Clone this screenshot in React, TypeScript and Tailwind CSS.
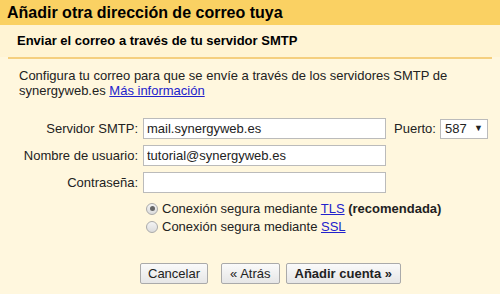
export default function App() {
  const font = { fontFamily: '"Liberation Sans", Arial, sans-serif' };
  return (
    <div className="w-[500px] h-[294px] bg-[#fff7de] text-[#222] overflow-hidden" style={font}>
      <div className="h-[25px] bg-[#fad163] px-[7px] flex items-center">
        <h1 className="text-[16px] font-bold text-black">Añadir otra dirección de correo tuya</h1>
      </div>
      <div className="bg-[#fff4d4] h-[32px] flex items-center px-[17px]">
        <h2 className="text-[13px] font-bold text-black">Enviar el correo a través de tu servidor SMTP</h2>
      </div>
      <div className="mx-[8px] h-[2px] bg-[#f5cf7e]" />

      <p className="px-[19px] pt-[9px] text-[13px] leading-[15px]">
        Configura tu correo para que se envíe a través de los servidores SMTP de
        <br />
        synergyweb.es <a href="#" className="text-[#2222cc] underline">Más información</a>
      </p>

      <div className="mt-[20px] grid grid-cols-[138px_243px_auto] gap-x-[5px] gap-y-[6px] items-center text-[13px]">
        <label className="text-right">Servidor SMTP:</label>
        <input
          className="h-[21px] border border-[#bbb] bg-white px-[3px] text-[13px] outline-none"
          defaultValue="mail.synergyweb.es"
        />
        <div className="flex items-center gap-[4px] pl-[3px]">
          <span>Puerto:</span>
          <div className="h-[20px] w-[48px] border border-[#bbb] bg-white flex items-center justify-between px-[4px]">
            <span>587</span>
            <span className="text-[9px]">▼</span>
          </div>
        </div>

        <label className="text-right">Nombre de usuario:</label>
        <input
          className="h-[21px] border border-[#bbb] bg-white px-[3px] text-[13px] outline-none"
          defaultValue="tutorial@synergyweb.es"
        />
        <div />

        <label className="text-right">Contraseña:</label>
        <input type="password" className="h-[21px] border border-[#bbb] bg-white px-[3px] outline-none" />
        <div />
      </div>

      <div className="ml-[146px] mt-[9px] flex flex-col gap-[5px] text-[13px]">
        <label className="flex items-center gap-[4px] h-[13px]">
          <span className="w-[12px] h-[12px] rounded-full border border-[#aaa] bg-gradient-to-b from-[#f4f4f4] to-[#dcdcdc] flex items-center justify-center">
            <span className="w-[5px] h-[5px] rounded-full bg-[#666]" />
          </span>
          <span>
            Conexión segura mediante <a href="#" className="text-[#2222cc] underline">TLS</a>{' '}
            <b>(recomendada)</b>
          </span>
        </label>
        <label className="flex items-center gap-[4px] h-[13px]">
          <span className="w-[12px] h-[12px] rounded-full border border-[#aaa] bg-gradient-to-b from-[#f4f4f4] to-[#dcdcdc]" />
          <span>
            Conexión segura mediante <a href="#" className="text-[#2222cc] underline">SSL</a>
          </span>
        </label>
      </div>

      <div className="ml-[140px] mt-[30px] flex gap-[6px] text-[13px]">
        <button className="h-[21px] px-[7px] border border-[#aaa] rounded-[2px] bg-gradient-to-b from-[#fafafa] to-[#e6e6e6] mr-[7px]">
          Cancelar
        </button>
        <button className="h-[21px] px-[8px] border border-[#aaa] rounded-[2px] bg-gradient-to-b from-[#fafafa] to-[#e6e6e6]">
          « Atrás
        </button>
        <button className="h-[21px] px-[8px] border border-[#aaa] rounded-[2px] bg-gradient-to-b from-[#fafafa] to-[#e6e6e6] font-bold">
          Añadir cuenta »
        </button>
      </div>
    </div>
  );
}
